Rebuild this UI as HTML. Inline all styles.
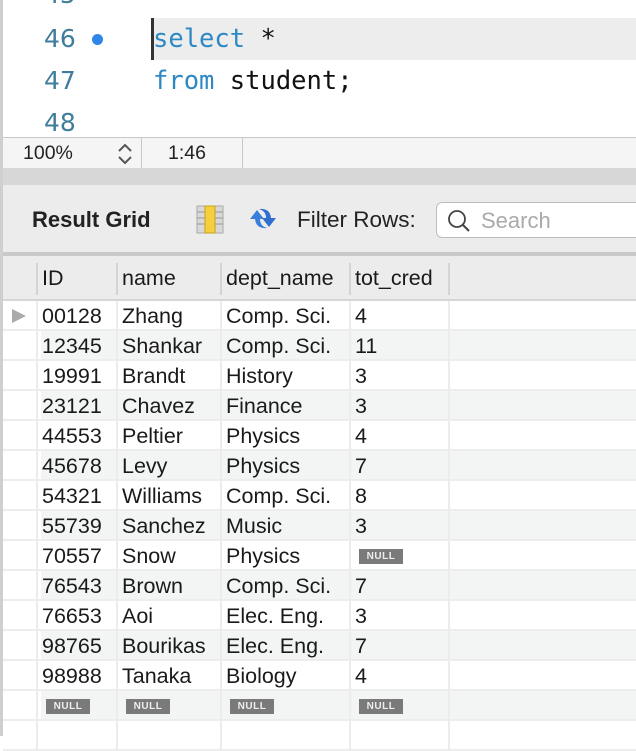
<!DOCTYPE html>
<html><head><meta charset="utf-8"><style>
*{margin:0;padding:0;box-sizing:border-box}
body{width:636px;height:736px;overflow:hidden;background:#fff;position:relative;font-family:"Liberation Sans",Arial,sans-serif}
.a{position:absolute}
.ln{font-family:"DejaVu Sans",sans-serif;font-size:25px;color:#3f7d9c;left:44px}
.code{font-family:"DejaVu Sans Mono",monospace;font-size:25.5px;left:153px;color:#111}
.kw{color:#2d88c4}
.cell{position:absolute;font-size:21.5px;color:#1a1a1a;white-space:nowrap}
.null{position:absolute;background:#7a7a7a;color:#eee;font-size:10px;font-weight:bold;width:44px;height:15px;line-height:15px;text-align:center;letter-spacing:0.5px}
</style></head><body>
<div class="a" style="left:0;top:0;width:3px;height:736px;background:#cfcfcf"></div>
<!-- editor -->
<div class="a" style="left:152px;top:18px;width:484px;height:42px;background:#ededed"></div>
<div class="a" style="left:151px;top:18px;width:3px;height:42px;background:#333"></div>
<div class="a ln" style="top:-20px">45</div>
<div class="a ln" style="top:24px">46</div>
<div class="a" style="left:92px;top:34px;width:11px;height:11px;border-radius:50%;background:#2f86e8"></div>
<div class="a ln" style="top:66px">47</div>
<div class="a ln" style="top:108px">48</div>
<div class="a code" style="top:24px"><span class="kw">select</span> *</div>
<div class="a code" style="top:66px"><span class="kw">from</span> student;</div>
<!-- status bar -->
<div class="a" style="left:3px;top:137px;width:633px;height:31px;background:#f5f5f5;border-top:1px solid #c8c8c8"></div>
<div class="a" style="left:23px;top:142px;font-size:19.5px;color:#222">100%</div>
<svg class="a" style="left:116px;top:142px" width="18" height="24" viewBox="0 0 18 24"><path d="M3 9 L9 3 L15 9 M3 15 L9 21 L15 15" fill="none" stroke="#555" stroke-width="2"/></svg>
<div class="a" style="left:141px;top:138px;width:1px;height:30px;background:#c8c8c8"></div>
<div class="a" style="left:168px;top:142px;font-size:19.5px;color:#222">1:46</div>
<div class="a" style="left:242px;top:138px;width:1px;height:30px;background:#c8c8c8"></div>
<div class="a" style="left:3px;top:168px;width:633px;height:17px;background:#d7d7d7"></div>
<!-- toolbar -->
<div class="a" style="left:3px;top:185px;width:633px;height:67px;background:#ececec"></div>
<div class="a" style="left:32px;top:207px;font-size:22px;font-weight:bold;color:#222">Result Grid</div>
<svg class="a" style="left:196px;top:205px" width="28" height="30" viewBox="0 0 28 30"><rect x="1" y="1" width="26" height="27" fill="#d8d8d8" stroke="#aaa"/><rect x="9" y="1" width="10" height="27" fill="#f5d03c" stroke="#c9a21a"/><g stroke="#999"><line x1="1" y1="7" x2="9" y2="7"/><line x1="1" y1="13" x2="9" y2="13"/><line x1="1" y1="19" x2="9" y2="19"/><line x1="19" y1="7" x2="27" y2="7"/><line x1="19" y1="13" x2="27" y2="13"/><line x1="19" y1="19" x2="27" y2="19"/></g></svg>
<svg class="a" style="left:246px;top:205px" width="34" height="28" viewBox="0 0 34 28"><path d="M4 14 L11 5 L18 14 L14 14 Q14 21 21 23 Q10 24 9 14 Z" fill="#3a7fdc"/><path d="M30 13 L23 22 L16 13 L20 13 Q20 6 13 4 Q24 3 25 13 Z" fill="#2f6fd0"/></svg>
<div class="a" style="left:297px;top:207px;font-size:22.5px;color:#222">Filter Rows:</div>
<div class="a" style="left:436px;top:202px;width:210px;height:36px;background:#fff;border:1px solid #bdbdbd;border-radius:6px"></div>
<svg class="a" style="left:446px;top:208px" width="26" height="26" viewBox="0 0 26 26"><circle cx="11" cy="11" r="8" fill="none" stroke="#444" stroke-width="1.8"/><line x1="17" y1="17" x2="23" y2="23" stroke="#444" stroke-width="2"/></svg>
<div class="a" style="left:481px;top:208px;font-size:22px;color:#aaa">Search</div>
<div class="a" style="left:3px;top:252px;width:633px;height:4px;background:#c9c9c9"></div>
<!-- header -->
<div class="a" style="left:3px;top:256px;width:633px;height:45px;background:#ececec;border-bottom:2px solid #d6d6d6"></div>
<div class="a" style="left:36px;top:263px;width:2px;height:32px;background:#d4d4d4"></div>
<div class="a" style="left:116px;top:263px;width:2px;height:32px;background:#d4d4d4"></div>
<div class="a" style="left:220px;top:263px;width:2px;height:32px;background:#d4d4d4"></div>
<div class="a" style="left:349px;top:263px;width:2px;height:32px;background:#d4d4d4"></div>
<div class="a" style="left:448px;top:263px;width:2px;height:32px;background:#d4d4d4"></div>
<div class="cell" style="left:42px;top:266px">ID</div>
<div class="cell" style="left:122px;top:266px">name</div>
<div class="cell" style="left:226px;top:266px">dept_name</div>
<div class="cell" style="left:355px;top:266px">tot_cred</div>
<div id="rows"></div>
<div class="a" style="left:12px;top:309px;width:0;height:0;border-top:7px solid transparent;border-bottom:7px solid transparent;border-left:14px solid #aaa"></div>
<script>
var d=[["00128","Zhang","Comp. Sci.","4"],["12345","Shankar","Comp. Sci.","11"],["19991","Brandt","History","3"],["23121","Chavez","Finance","3"],["44553","Peltier","Physics","4"],["45678","Levy","Physics","7"],["54321","Williams","Comp. Sci.","8"],["55739","Sanchez","Music","3"],["70557","Snow","Physics",null],["76543","Brown","Comp. Sci.","7"],["76653","Aoi","Elec. Eng.","3"],["98765","Bourikas","Elec. Eng.","7"],["98988","Tanaka","Biology","4"],[null,null,null,null]];
var h="",xs=[42,122,226,355];
for(var i=0;i<15;i++){var y=301+i*30;
 if(i%2==1)h+='<div class="a" style="left:41px;top:'+y+'px;width:595px;height:30px;background:#f3f4f4"></div>';
 h+='<div class="a" style="left:3px;top:'+(y+28)+'px;width:633px;height:2px;background:#ededed"></div>';
 [36,116,220,349,448].forEach(function(x){h+='<div class="a" style="left:'+x+'px;top:'+y+'px;width:2px;height:30px;background:#ececec"></div>';});
 if(i<14){var r=d[i];for(var j=0;j<4;j++){var v=r[j];
  if(v===null)h+='<div class="null" style="left:'+(xs[j]+4)+'px;top:'+(y+8)+'px">NULL</div>';
  else h+='<div class="cell" style="left:'+xs[j]+'px;top:'+(y+3)+'px">'+v+'</div>';}}
}
document.getElementById("rows").innerHTML=h;
</script>
</body></html>
